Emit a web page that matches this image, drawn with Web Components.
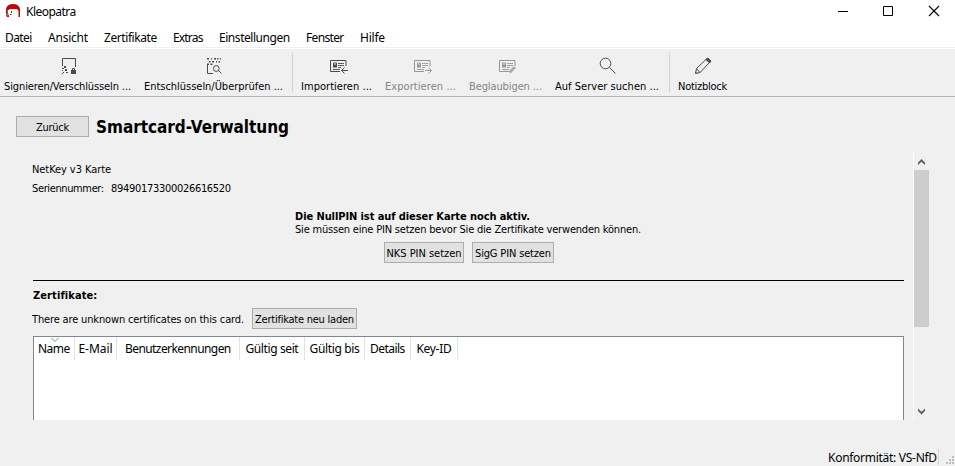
<!DOCTYPE html>
<html lang="de"><head><meta charset="utf-8"><title>Kleopatra</title>
<style>html,body{margin:0;height:100%;overflow:hidden;background:#f0f0f0}</style></head>
<body><kleo-window></kleo-window>
<script>
const define=(name,html,setup)=>customElements.define(name,class extends HTMLElement{
  connectedCallback(){
    if(this.shadowRoot)return;
    this.attachShadow({mode:'open'}).innerHTML=html;
    if(setup)setup(this,this.shadowRoot);
  }
});

/* Text run that spaces its letters to fill a given width */
define('fit-text','<style>:host{display:block;white-space:nowrap;flex:none}span{display:inline-block}</style><span><slot></slot></span>',(el,root)=>{
  const w=+el.getAttribute('w'),s=root.querySelector('span');
  el.style.width=w+'px';
  s.style.letterSpacing=((w-s.getBoundingClientRect().width)/(el.textContent.length-.5))+'px';
});

define('title-bar',`<style>
:host{display:flex;height:26px;align-items:flex-start;background:#fff;font:12px/16px "Noto Sans",sans-serif;padding-left:5px;box-sizing:border-box}
.logo{width:16px;height:16px;margin-top:3px}fit-text{margin:4px 0 0 5px}
.controls{margin-left:auto;display:flex;margin-top:4px;padding-right:13px;gap:30px}.controls svg{width:16px;height:16px}
</style>
<svg class="logo" viewBox="0 0 16 16"><path d="M1 11V6Q2 1 8 1Q14 1 15 6V14H13V7H4V14H2Q1 13 1 11Z" fill="#b80c0c"/><path d="M2.500 7.500L6 5.500H12L13.500 8V14H5L3.500 12Z" fill="#fff"/><path d="M2 7Q3 2 8 2Q13 2 14 7L12 6H4Z" fill="#bd0808"/><path d="M1 10h2v3H2Z" fill="#777"/><path d="M6.500 8v2M5 11.500h1.500" stroke="#333"/></svg>
<fit-text w="50">Kleopatra</fit-text>
<div class="controls">
<svg viewBox="0 0 16 16"><path d="M4 7.500h10" stroke="#000"/></svg>
<svg viewBox="0 0 16 16"><path d="M3.500 2.500h9v9h-9z" fill="none" stroke="#000"/></svg>
<svg viewBox="0 0 16 16"><path d="M3 2l10 10M13 2L3 12" stroke="#000" stroke-width="1.100"/></svg>
</div>`);

define('menu-bar',`<style>
:host{display:flex;height:23px;box-sizing:border-box;font:12px/16px "Noto Sans",sans-serif;padding:4px 0 0 5px;gap:16px;background:linear-gradient(#fff 21px,#f0f0f0 21px,#f0f0f0 22px,#fff 22px)}
</style><fit-text w="27">Datei</fit-text><fit-text w="40">Ansicht</fit-text><fit-text w="53">Zertifikate</fit-text><fit-text w="30">Extras</fit-text><fit-text w="71">Einstellungen</fit-text><fit-text w="38">Fenster</fit-text><fit-text w="25">Hilfe</fit-text>`);

define('tool-button',`<style>
:host{display:flex;flex-direction:column;align-items:center;width:var(--w);flex:none;color:#000}
:host([disabled]){color:#858585}
div{height:24px;width:24px}div ::slotted(svg){display:block;width:24px;height:24px}
.label{align-self:flex-start;margin-top:1px}
</style><div><slot name="icon"></slot></div><span class="label"><slot></slot></span>`);

const card='<path d="M18 17.500H5.500v-11h15.500V12"/><path d="M8 10.500h4v3H8z" fill="var(--i)" stroke="none"/><path d="M8.500 11V9h3v2"/><path d="M13 9.500h6M13 11.500h6M13 13.500h3M8 15.500h7" stroke-width=".9"/>';
const cardOpen=card.replace('M18 17.500','M15 17.500');
define('tool-bar',`<style>
:host{display:flex;height:48px;box-sizing:border-box;border-bottom:1px solid #b5b5b5;background:#f0f0f0;padding:5px 0 0 4px;font:11px/15px "DejaVu Sans Condensed","DejaVu Sans",sans-serif;font-stretch:condensed}
tool-button{margin-right:13px}svg{--i:#4a4a4a;fill:none;stroke:var(--i)}[disabled] svg{--i:#969696}
i{width:1px;height:39px;background:#d2d2d2;margin:-1px 8px 0 -5px}
</style>
<tool-button style="--w:128px;margin-right:12px"><svg slot="icon" viewBox="0 0 24 24"><path d="M6.500 12V4.500h13V13"/><path d="M8 12h2v2H8zM6 14h2v1H6zM9 15h2v2H9zM6 16h1v1H6zM7 18h1v1H7zM10 18h2v1h-2zM6 19h1v1H6zM15 16h5v4h-5z" fill="var(--i)" stroke="none"/><path d="M16.500 16.500v-2h2v2"/></svg><fit-text w="127">Signieren/Verschlüsseln ...</fit-text></tool-button>
<tool-button style="--w:140px"><svg slot="icon" viewBox="0 0 24 24"><path d="M5 4h2v1.500H5zM9 4h1v1.500H9zM12 4h2v1.500h-2zM15 4h1.500v1.500h-1.500zM18 4h1v1.500h-1zM7 7h1.500v1.500H7zM10 7h2v1.500h-2zM14 7h1v1.500h-1zM16.500 7h1.500v1.500h-1.500zM5 9.500h2v1.500H5zM8.500 9.500h2v1.500H8.500z" fill="var(--i)" stroke="none"/><path d="M5.500 11v8.500H11"/><circle cx="14.300" cy="14.500" r="2.900"/><path d="M16.500 16.500l3 3"/></svg><fit-text w="139">Entschlüsseln/Überprüfen ...</fit-text></tool-button><i></i>
<tool-button style="--w:72px;margin-right:12px"><svg slot="icon" viewBox="0 0 24 24">${cardOpen}<path d="M23 16.500h-6M19.500 13.500l-3 3 3 3"/></svg><fit-text w="71">Importieren ...</fit-text></tool-button>
<tool-button disabled style="--w:72px;margin-right:12px"><svg slot="icon" viewBox="0 0 24 24">${cardOpen}<path d="M16 16.500h6.500M19.500 13.500l3 3-3 3"/></svg><fit-text w="71">Exportieren ...</fit-text></tool-button>
<tool-button disabled style="--w:74px;margin-right:12px"><svg slot="icon" viewBox="0 0 24 24">${cardOpen}<path d="M15.500 18.500l5.500-5.500" stroke-width="2.800" stroke="#a9a9a9"/></svg><fit-text w="73">Beglaubigen ...</fit-text></tool-button>
<tool-button style="--w:104px;margin-right:15px"><svg slot="icon" viewBox="0 0 24 24"><circle cx="10.500" cy="9.500" r="5.300"/><path d="M14.500 13.500l6 6"/></svg><fit-text w="104">Auf Server suchen ...</fit-text></tool-button><i></i>
<tool-button style="--w:50px"><svg slot="icon" viewBox="0 0 24 24"><path d="M4.500 19.500l1-5L16 4.500l3.500 3L9 18.500z"/><path d="M15 5.500l3.500 3.500L20 7l-3-3z" fill="var(--i)"/><path d="M5.500 14.500l3.500 4M4.500 18l1.500 1.500"/></svg><fit-text w="49">Notizblock</fit-text></tool-button>`);

define('push-button',`<style>:host{display:flex;justify-content:center;align-items:center;box-sizing:border-box;height:21px;width:var(--w);flex:none;background:#e1e1e1;border:1px solid #adadad;color:#000}::slotted(*){position:relative;top:.5px}</style><slot></slot>`);

define('cert-table',`<style>
:host{display:block;box-sizing:border-box;height:84px;border:1px solid #828790;border-bottom:0;background:#fff;font:12px/16px "Noto Sans",sans-serif}
.head{display:flex;height:24px;align-items:flex-start}
.cell{position:relative;display:flex;justify-content:center;box-sizing:border-box;width:var(--w);height:23px;border-right:1px solid #e2e2e2;padding-top:4px;flex:none}
svg{position:absolute;left:17px;top:0;width:8px;height:5px}
</style><div class="head">
<div class="cell" style="--w:41px"><svg viewBox="0 0 8 5"><path d="M.5 1L4 4.500 7.500 1" fill="none" stroke="#8a8a8a"/></svg><fit-text w="32">Name</fit-text></div>
<div class="cell" style="--w:42px"><fit-text w="34">E-Mail</fit-text></div>
<div class="cell" style="--w:123px"><fit-text w="106">Benutzerkennungen</fit-text></div>
<div class="cell" style="--w:65px"><fit-text w="53">Gültig seit</fit-text></div>
<div class="cell" style="--w:60px"><fit-text w="50">Gültig bis</fit-text></div>
<div class="cell" style="--w:46px"><fit-text w="35">Details</fit-text></div>
<div class="cell" style="--w:47px"><fit-text w="35">Key-ID</fit-text></div></div>`);

define('scroll-bar',`<style>
:host{display:flex;flex-direction:column;box-sizing:border-box;width:16px;height:267px;border-left:1px solid #fff;flex:none}
svg{width:15px;height:17px;flex:none}.thumb{height:157px;background:#cdcdcd}.space{flex:1}
</style><svg viewBox="0 0 15 17"><path d="M4 12V9.500L7.500 6 11 9.500V12L7.500 8.700z" fill="#606060"/></svg><div class="thumb"></div><div class="space"></div><svg viewBox="0 0 15 17"><path d="M4 5.500V8l3.500 3.500L11 8V5.500L7.500 8.800z" fill="#606060"/></svg>`);

define('card-view',`<style>
:host{display:flex;flex-direction:column;height:369px;font:11px/13px "DejaVu Sans Condensed","DejaVu Sans",sans-serif;font-stretch:condensed}
.top{display:flex;padding:19px 0 0 16px;height:56px;box-sizing:border-box}.top .title{font-size:17px;line-height:20px;font-weight:bold;margin:1px 0 0 7px}
.body{display:flex}.main{width:872px;margin:0 9px 0 32px;height:267px;overflow:hidden;display:flex;flex-direction:column}
.serial{display:flex;gap:7px;margin-top:6px}.null{margin:15px 0 0 263px}.b{font-weight:bold}
.pins{display:flex;gap:8px;margin:6px 0 0 352px}hr{border:0;height:1px;width:871px;margin:17px 0 0 1px;background:#000;flex:none}
.status{display:flex;align-items:center;height:21px;margin:6px 0 7px;gap:8px}.status>fit-text{padding-top:1px}cert-table{margin-left:1px;flex:none}
.foot{display:flex;margin-top:auto;height:17px;padding-left:828px;font:12px/16px "Noto Sans",sans-serif}.foot fit-text{margin-top:1px}.foot i{width:1px;height:16px;margin-left:1px;background:#d5d5d5}.foot svg{width:9px;height:9px;margin:7px 0 0 7px}
</style>
<div class="top"><push-button style="--w:73px"><fit-text w="33">Zurück</fit-text></push-button><fit-text class="title" w="193">Smartcard-Verwaltung</fit-text></div>
<div class="body"><div class="main">
<fit-text w="79" style="margin-top:10px">NetKey v3 Karte</fit-text>
<div class="serial"><fit-text w="72">Seriennummer:</fit-text><fit-text w="120">89490173300026616520</fit-text></div>
<div class="null"><fit-text class="b" w="235">Die NullPIN ist auf dieser Karte noch aktiv.</fit-text><fit-text w="346">Sie müssen eine PIN setzen bevor Sie die Zertifikate verwenden können.</fit-text></div>
<div class="pins"><push-button style="--w:80px"><fit-text w="75">NKS PIN setzen</fit-text></push-button><push-button style="--w:82px"><fit-text w="76">SigG PIN setzen</fit-text></push-button></div>
<hr><fit-text class="b" w="64" style="margin:8px 0 0 1px">Zertifikate:</fit-text>
<div class="status"><fit-text w="212">There are unknown certificates on this card.</fit-text><push-button style="--w:105px"><fit-text w="99">Zertifikate neu laden</fit-text></push-button></div>
<cert-table></cert-table></div><scroll-bar></scroll-bar></div>
<div class="foot"><fit-text w="109">Konformität: VS-NfD</fit-text><i></i><svg viewBox="0 0 9 9"><path d="M6 0h2v2H6zM3 3h2v2H3zM6 3h2v2H6zM0 6h2v2H0zM3 6h2v2H3zM6 6h2v2H6z" fill="#bdbdbd"/></svg></div>`);

define('kleo-window',`<style>:host{display:flex;flex-direction:column;width:955px;height:466px;background:#f0f0f0;color:#000}title-bar,menu-bar,tool-bar{flex:none}</style><title-bar></title-bar><menu-bar></menu-bar><tool-bar></tool-bar><card-view></card-view>`);
</script></body></html>
